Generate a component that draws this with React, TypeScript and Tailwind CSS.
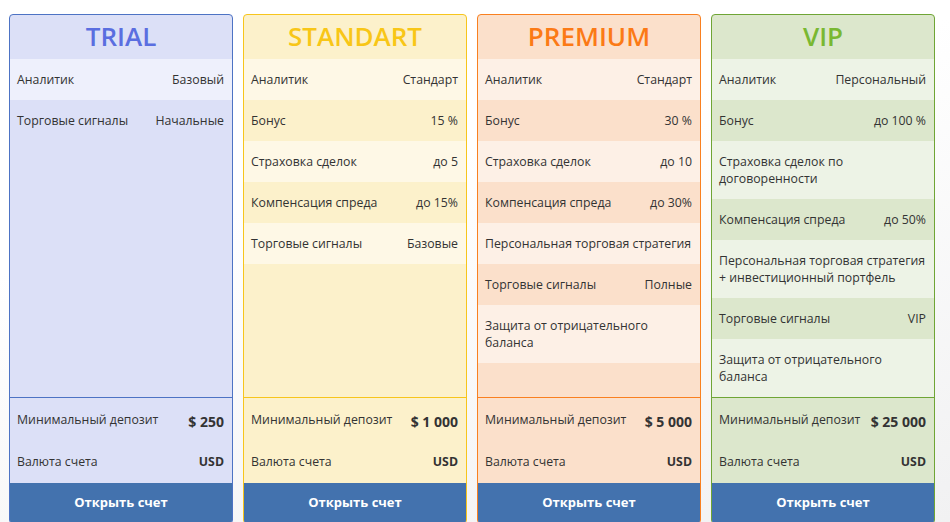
type Row = { label: string; value?: string };

type Plan = {
  name: string;
  title: string;
  border: string;
  bg: string;
  light: string;
  rows: Row[];
  deposit: string;
};

// labels that span two lines carry an explicit break, as in the original layout
const plans: Plan[] = [
  {
    name: "TRIAL",
    title: "text-[#5a6ee0]",
    border: "border-[#4d73c4]",
    bg: "bg-[#dce0f7]",
    light: "bg-[#eef0fc]",
    rows: [
      { label: "Аналитик", value: "Базовый" },
      { label: "Торговые сигналы", value: "Начальные" },
    ],
    deposit: "$ 250",
  },
  {
    name: "STANDART",
    title: "text-[#f8c617]",
    border: "border-[#f7c51c]",
    bg: "bg-[#fcf1cb]",
    light: "bg-[#fef8e6]",
    rows: [
      { label: "Аналитик", value: "Стандарт" },
      { label: "Бонус", value: "15 %" },
      { label: "Страховка сделок", value: "до 5" },
      { label: "Компенсация спреда", value: "до 15%" },
      { label: "Торговые сигналы", value: "Базовые" },
    ],
    deposit: "$ 1 000",
  },
  {
    name: "PREMIUM",
    title: "text-[#fb7a16]",
    border: "border-[#f98020]",
    bg: "bg-[#fbe0cb]",
    light: "bg-[#fdf0e6]",
    rows: [
      { label: "Аналитик", value: "Стандарт" },
      { label: "Бонус", value: "30 %" },
      { label: "Страховка сделок", value: "до 10" },
      { label: "Компенсация спреда", value: "до 30%" },
      { label: "Персональная торговая стратегия" },
      { label: "Торговые сигналы", value: "Полные" },
      { label: "Защита от отрицательного\nбаланса" },
    ],
    deposit: "$ 5 000",
  },
  {
    name: "VIP",
    title: "text-[#79b832]",
    border: "border-[#6fa535]",
    bg: "bg-[#dce7cc]",
    light: "bg-[#edf3e6]",
    rows: [
      { label: "Аналитик", value: "Персональный" },
      { label: "Бонус", value: "до 100 %" },
      { label: "Страховка сделок по\nдоговоренности" },
      { label: "Компенсация спреда", value: "до 50%" },
      { label: "Персональная торговая стратегия\n+ инвестиционный портфель" },
      { label: "Торговые сигналы", value: "VIP" },
      { label: "Защита от отрицательного\nбаланса" },
    ],
    deposit: "$ 25 000",
  },
];

function PlanCard({ plan }: { plan: Plan }) {
  return (
    <div
      className={`flex w-[224px] flex-col overflow-hidden rounded-[4px] border ${plan.border} ${plan.bg}`}
    >
      <div className="flex h-[44px] items-center justify-center pb-[2px]">
        <h2 className={`text-[26px] font-semibold leading-none ${plan.title}`}>
          {plan.name}
        </h2>
      </div>

      <div className="flex-1">
        {plan.rows.map((r, i) => (
          <div
            key={r.label}
            className={`flex min-h-[41px] items-center justify-between gap-2 py-3 pl-[7px] pr-[8px] text-[12.3px] leading-[17px] text-[#333] ${
              i % 2 === 0 ? plan.light : ""
            }`}
          >
            <span className="whitespace-pre">{r.label}</span>
            {r.value && <span className="shrink-0 text-right">{r.value}</span>}
          </div>
        ))}
      </div>

      <div className={`border-t pt-[1px] ${plan.border}`}>
        <div className="flex h-[42px] items-center justify-between pl-[7px] pr-[8px] text-[#333]">
          <span className="text-[12.3px]">Минимальный депозит</span>
          <span className="pt-[2px] text-[14px] font-bold">{plan.deposit}</span>
        </div>
        <div className="flex h-[42px] items-center justify-between pl-[7px] pr-[8px] text-[#333]">
          <span className="text-[12.3px]">Валюта счета</span>
          <span className="text-[12.3px] font-bold">USD</span>
        </div>
      </div>

      <button
        type="button"
        className="h-[40px] bg-[#4372ae] text-[13px] font-bold text-white"
      >
        Открыть счет
      </button>
    </div>
  );
}

export default function App() {
  return (
    <div
      className="h-[522px] w-[950px] overflow-hidden bg-[linear-gradient(165deg,#ffffff_35%,#f1f1f2_100%)] pl-[9px] pt-[14px]"
      style={{ fontFamily: '"Open Sans", "Noto Sans", sans-serif' }}
    >
      <div className="flex items-stretch gap-[10px]">
        {plans.map((p) => (
          <PlanCard key={p.name} plan={p} />
        ))}
      </div>
    </div>
  );
}
